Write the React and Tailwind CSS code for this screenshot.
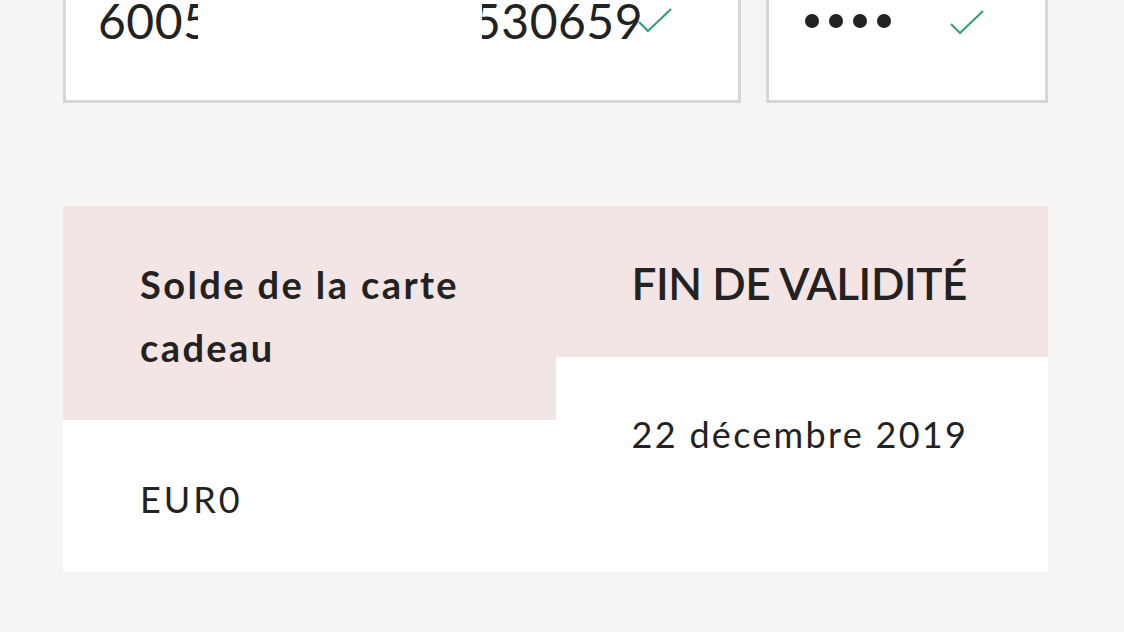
export default function App() {
  const check = (
    <svg width="36" height="28" viewBox="0 0 36 28" fill="none">
      <path d="M2 15 L11 24 L34 2" stroke="#3b9e7b" strokeWidth="2.2" />
    </svg>
  )

  return (
    <div
      className="w-[1124px] h-[632px] overflow-hidden bg-[#f7f5f3] text-[#222222]"
      style={{ fontFamily: 'Lato, "Open Sans", sans-serif' }}
    >
      <div className="pl-[63px] w-[1048px]">
        {/* Card number + PIN */}
        <div className="flex gap-[25px]">
          <div className="w-[678px] h-[103px] bg-white border-x-[3px] border-b-[3px] border-[#d6d6d6] flex items-start pl-[32px]">
            <div className="flex items-start -mt-[3px] text-[48px] leading-[48px] tracking-[0.5px]">
              <span className="block w-[100px] overflow-hidden whitespace-nowrap">6005</span>
              <span className="block w-[284px]" />
              <span className="flex justify-end w-[161px] overflow-hidden whitespace-nowrap">5530659</span>
              <span className="-ml-[6px] mt-[10px]">{check}</span>
            </div>
          </div>
          <div className="w-[282px] h-[103px] bg-white border-x-[3px] border-b-[3px] border-[#d6d6d6] flex items-start pl-[36px]">
            <div className="flex gap-[10px] mt-[14px]">
              <span className="w-[14px] h-[14px] rounded-full bg-[#222222]" />
              <span className="w-[14px] h-[14px] rounded-full bg-[#222222]" />
              <span className="w-[14px] h-[14px] rounded-full bg-[#222222]" />
              <span className="w-[14px] h-[14px] rounded-full bg-[#222222]" />
            </div>
            <span className="ml-[58px] mt-[9px]">{check}</span>
          </div>
        </div>

        {/* Balance table */}
        <div className="mt-[103px] grid grid-cols-2 bg-white">
          <div className="flex flex-col">
            <div className="h-[214px] bg-[#f3e5e3] pl-[77px] pt-[47px]">
              <p className="text-[38px] leading-[63px] font-bold tracking-[2.4px] w-[380px]">Solde de la carte cadeau</p>
            </div>
            <div className="h-[152px] pl-[77px] pt-[57px]">
              <p className="text-[36px] leading-[44px] tracking-[3px]">EUR0</p>
            </div>
          </div>
          <div className="flex flex-col">
            <div className="h-[151px] bg-[#f3e5e3] pl-[76px] pt-[51px]">
              <p className="text-[44px] leading-[52px] font-semibold tracking-[-0.4px]">FIN DE VALIDITÉ</p>
            </div>
            <div className="h-[215px] pl-[76px] pt-[55px]">
              <p className="text-[36px] leading-[44px] tracking-[2.3px]">22 décembre 2019</p>
            </div>
          </div>
        </div>
      </div>
    </div>
  )
}
